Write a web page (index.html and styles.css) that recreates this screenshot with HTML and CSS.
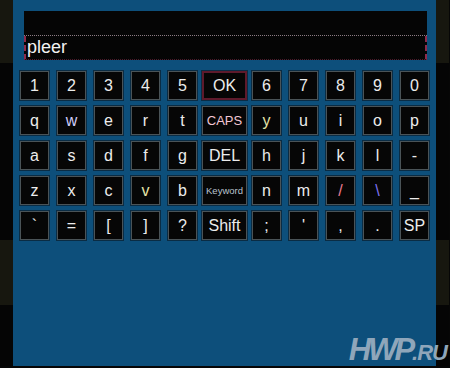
FILE: index.html
```html
<!DOCTYPE html>
<html>
<head>
<meta charset="utf-8">
<link rel="stylesheet" href="styles.css">
</head>
<body>
<div class="screen">
  <div class="side">
    <div class="band olive b1"></div>
    <div class="band dark b2"></div>
    <div class="band olive b3"></div>
    <div class="band dark b4"></div>
  </div>
  <main class="panel">
    <div class="input">
      <div class="line line-top"></div>
      <div class="line line-active">pleer</div>
    </div>
    <div class="keyboard">
      <div class="row">
        <div class="key">1</div><div class="key">2</div><div class="key">3</div><div class="key">4</div><div class="key">5</div>
        <div class="key wide focus">OK</div>
        <div class="key">6</div><div class="key">7</div><div class="key">8</div><div class="key">9</div><div class="key">0</div>
      </div>
      <div class="row">
        <div class="key">q</div><div class="key tint-blue">w</div><div class="key">e</div><div class="key">r</div><div class="key">t</div>
        <div class="key wide caps">CAPS</div>
        <div class="key tint-yellow">y</div><div class="key">u</div><div class="key">i</div><div class="key">o</div><div class="key">p</div>
      </div>
      <div class="row">
        <div class="key">a</div><div class="key">s</div><div class="key">d</div><div class="key">f</div><div class="key">g</div>
        <div class="key wide">DEL</div>
        <div class="key">h</div><div class="key">j</div><div class="key">k</div><div class="key">l</div><div class="key">-</div>
      </div>
      <div class="row">
        <div class="key">z</div><div class="key">x</div><div class="key">c</div><div class="key tint-yellow">v</div><div class="key">b</div>
        <div class="key wide keyword">Keyword</div>
        <div class="key">n</div><div class="key">m</div><div class="key tint-red">/</div><div class="key tint-violet">\</div><div class="key">_</div>
      </div>
      <div class="row">
        <div class="key">`</div><div class="key">=</div><div class="key">[</div><div class="key">]</div><div class="key">?</div>
        <div class="key wide">Shift</div>
        <div class="key">;</div><div class="key">'</div><div class="key">,</div><div class="key">.</div><div class="key">SP</div>
      </div>
    </div>
  </main>
  <div class="side">
    <div class="band olive b1"></div>
    <div class="band dark b2"></div>
    <div class="band olive b3"></div>
    <div class="band dark b4"></div>
  </div>
  <div class="logo"><span class="logo-hw">HWP</span><span class="logo-ru">.RU</span></div>
</div>
</body>
</html>
```

FILE: styles.css
```css
html, body {
  margin: 0;
  padding: 0;
}
body {
  width: 450px;
  height: 368px;
  overflow: hidden;
  background: #060606;
  font-family: "Liberation Sans", Arial, sans-serif;
}
.screen {
  position: relative;
  display: flex;
  height: 366px;
}
.side {
  width: 13px;
  display: flex;
  flex-direction: column;
}
.side:last-of-type {
  width: 14px;
}
.band.olive { background: #17170f; }
.band.dark { background: #050505; }
.b1 { height: 63px; }
.b2 { height: 177px; }
.b3 { height: 65px; }
.b4 { flex: 1; }

.panel {
  width: 423px;
  background: #0d4f7b;
  padding-top: 11px;
  box-sizing: border-box;
}
.input {
  margin: 0 9px 0 11px;
  background: #050505;
}
.line-top {
  height: 24px;
  border-bottom: 1px dotted #8c7c84;
}
.line-active {
  height: 24px;
  line-height: 23px;
  box-sizing: border-box;
  border-left: 2px dashed #8e2a4c;
  border-right: 2px dashed #8e2a4c;
  border-bottom: 1px dotted #4a1a2a;
  padding-left: 1px;
  color: #f2f2f2;
  font-size: 18px;
}
.keyboard {
  margin-top: 11px;
  padding: 0 7px;
  display: flex;
  flex-direction: column;
  gap: 6px;
}
.row {
  display: flex;
  gap: 8px;
}
.key {
  width: 29px;
  height: 29px;
  box-sizing: border-box;
  border: 1px solid #4a5357;
  box-shadow: 0 0 0 1px #0a2c44;
  background: #060606;
  color: #ececec;
  font-size: 16px;
  display: flex;
  align-items: center;
  justify-content: center;
}
.key.wide {
  width: 45px;
  margin: 0 -3px;
}
.key.focus {
  border: 2px solid #5e1a2c;
}
.key.caps {
  color: #f2c6d4;
  font-size: 13px;
}
.key.keyword {
  color: #b9c4cf;
  font-size: 9.5px;
}
.tint-blue { color: #cfcdfb; }
.tint-yellow { color: #e4e3a6; }
.tint-red { color: #e87a92; }
.tint-violet { color: #7d72f0; }

.logo {
  position: absolute;
  right: 3px;
  bottom: -2px;
  color: #8fa6ba;
  font-weight: bold;
  font-style: italic;
  white-space: nowrap;
  line-height: 26px;
}
.logo-hw {
  font-size: 31px;
  letter-spacing: -3px;
}
.logo-ru {
  font-size: 22px;
  letter-spacing: -1px;
}
```
